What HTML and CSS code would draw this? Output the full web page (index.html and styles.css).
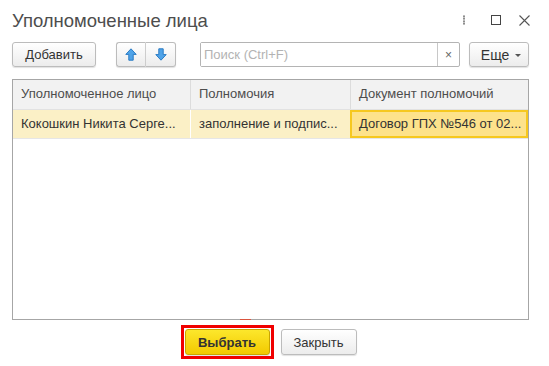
FILE: index.html
```html
<!DOCTYPE html>
<html lang="ru">
<head>
  <meta charset="UTF-8">
  <title>Уполномоченные лица</title>
  <link rel="stylesheet" href="styles.css">
</head>
<body>
  <div class="window">
    <div class="titlebar">
      <h1 class="title">Уполномоченные лица</h1>
      <div class="win-controls">
        <span class="dots"></span>
        <span class="maximize"></span>
        <svg class="close" width="11" height="11" viewBox="0 0 11 11">
          <path d="M0.5 0.5 L10.5 10.5 M10.5 0.5 L0.5 10.5" stroke="#555" stroke-width="1.1"/>
        </svg>
      </div>
    </div>

    <div class="toolbar">
      <button class="btn add-btn">Добавить</button>
      <div class="btn-group">
        <button class="btn icon-btn">
          <svg width="12" height="13" viewBox="0 0 12 13">
            <path d="M6 0.8 L11.2 6.4 L8.2 6.4 L8.2 12.2 L3.8 12.2 L3.8 6.4 L0.8 6.4 Z" fill="#4fa3e8" stroke="#2c7cc4" stroke-width="1"/>
          </svg>
        </button>
        <button class="btn icon-btn">
          <svg width="12" height="13" viewBox="0 0 12 13">
            <path d="M6 12.2 L11.2 6.6 L8.2 6.6 L8.2 0.8 L3.8 0.8 L3.8 6.6 L0.8 6.6 Z" fill="#4fa3e8" stroke="#2c7cc4" stroke-width="1"/>
          </svg>
        </button>
      </div>
      <div class="search">
        <input class="search-input" type="text" placeholder="Поиск (Ctrl+F)">
        <span class="search-clear">×</span>
      </div>
      <button class="btn more-btn">Еще <span class="caret"></span></button>
    </div>

    <div class="grid">
      <div class="row header-row">
        <div class="cell c1">Уполномоченное лицо</div>
        <div class="cell c2">Полномочия</div>
        <div class="cell c3">Документ полномочий</div>
      </div>
      <div class="row data-row">
        <div class="cell c1">Кокошкин Никита Серге...</div>
        <div class="cell c2">заполнение и подпис...</div>
        <div class="cell c3 current">Договор ГПХ №546 от 02...</div>
      </div>
      <span class="red-mark"></span>
    </div>

    <div class="footer">
      <div class="highlight">
        <button class="btn primary-btn">Выбрать</button>
      </div>
      <button class="btn close-btn">Закрыть</button>
    </div>
  </div>
</body>
</html>
```

FILE: styles.css
```css
body {
  margin: 0;
  padding: 0;
  background: #fff;
  font-family: "Liberation Sans", Arial, sans-serif;
  font-size: 13px;
  color: #333;
}

.window {
  width: 549px;
  height: 366px;
  box-sizing: border-box;
  padding: 0 20px 0 12px;
}

.titlebar {
  display: flex;
  justify-content: space-between;
  align-items: center;
  height: 40px;
}

.title {
  margin: 0;
  font-weight: normal;
  font-size: 18.5px;
  color: #4d4d4d;
  padding-top: 1px;
}

.win-controls {
  display: flex;
  align-items: center;
  margin-right: -1px;
}

.dots {
  width: 2px;
  height: 10px;
  background: radial-gradient(circle, #777 0.8px, transparent 1.1px) 0 0 / 2px 2.5px repeat-y;
  margin-right: 26px;
}

.maximize {
  width: 8px;
  height: 8px;
  border: 1px solid #444;
  margin-right: 18px;
}

.close {
  display: block;
}

.toolbar {
  display: flex;
  align-items: center;
  height: 25px;
  margin-top: 2px;
}

.btn {
  font-family: inherit;
  font-size: 13px;
  color: #333;
  height: 25px;
  box-sizing: border-box;
  border: 1px solid #bcbcbc;
  border-radius: 3px;
  background: linear-gradient(#ffffff, #ececec);
  box-shadow: 0 1px 1px rgba(0, 0, 0, 0.12);
  padding: 0 10px;
  cursor: pointer;
}

.add-btn {
  width: 84px;
}

.btn-group {
  display: flex;
  margin-left: 20px;
}

.icon-btn {
  width: 30px;
  padding: 0;
  display: flex;
  align-items: center;
  justify-content: center;
}

.btn-group .icon-btn:first-child {
  border-radius: 3px 0 0 3px;
  border-right: 1px solid #d0d0d0;
}

.btn-group .icon-btn:last-child {
  border-radius: 0 3px 3px 0;
  border-left: none;
}

.search {
  display: flex;
  margin-left: 24px;
  width: 260px;
  height: 25px;
  box-sizing: border-box;
  border: 1px solid #b4b4b4;
  border-radius: 2px;
}

.search-input {
  flex: 1;
  border: none;
  outline: none;
  font-family: inherit;
  font-size: 13px;
  padding: 0 3px;
  min-width: 0;
}

.search-input::placeholder {
  color: #b3b3b3;
}

.search-clear {
  width: 21px;
  border-left: 1px solid #c8c8c8;
  display: flex;
  align-items: center;
  justify-content: center;
  font-size: 12px;
  color: #666;
}

.more-btn {
  margin-left: 9px;
  width: 60px;
  padding: 0 0 0 4px;
  font-size: 14px;
}

.caret {
  display: inline-block;
  width: 0;
  height: 0;
  border-left: 3px solid transparent;
  border-right: 3px solid transparent;
  border-top: 3px solid #555;
  vertical-align: middle;
  margin-left: 2px;
}

.grid {
  position: relative;
  margin-top: 12px;
  height: 241px;
  box-sizing: border-box;
  border: 1px solid #a6a6a6;
}

.row {
  display: flex;
}

.cell {
  box-sizing: border-box;
  padding: 0 8px;
  white-space: nowrap;
  overflow: hidden;
}

.c1 {
  width: 177px;
}

.c2 {
  width: 160px;
}

.c3 {
  flex: 1;
}

.header-row {
  height: 29px;
  background: #f2f2f2;
  border-bottom: 1px solid #e2e2e2;
}

.header-row .cell {
  line-height: 28px;
  color: #4d4d4d;
  border-left: 1px solid #dcdcdc;
}

.header-row .c1 {
  border-left: none;
}

.data-row {
  height: 28px;
  background: #fbf0c6;
  border-bottom: 1px solid #e6e6e6;
}

.data-row .cell {
  line-height: 27px;
  color: #333;
  border-left: 1px solid #fff;
}

.data-row .c1 {
  border-left: none;
}

.data-row .current {
  background: #fde28b;
  border: 2px solid #f6c81f;
  line-height: 23px;
  padding-left: 7px;
}

.red-mark {
  position: absolute;
  left: 227px;
  bottom: -1px;
  width: 11px;
  height: 1px;
  background: #d9533e;
}

.footer {
  display: flex;
  justify-content: center;
  align-items: center;
  margin-top: 5px;
  padding-right: 4px;
  gap: 7px;
}

.highlight {
  border: 3px solid #f00000;
  padding: 1px;
}

.primary-btn {
  display: block;
  width: 85px;
  height: 26px;
  background: linear-gradient(#fce72c, #f2c900);
  border-color: #c9a400;
  font-weight: bold;
  font-size: 13px;
  color: #333;
}

.close-btn {
  width: 76px;
  height: 26px;
}
```
